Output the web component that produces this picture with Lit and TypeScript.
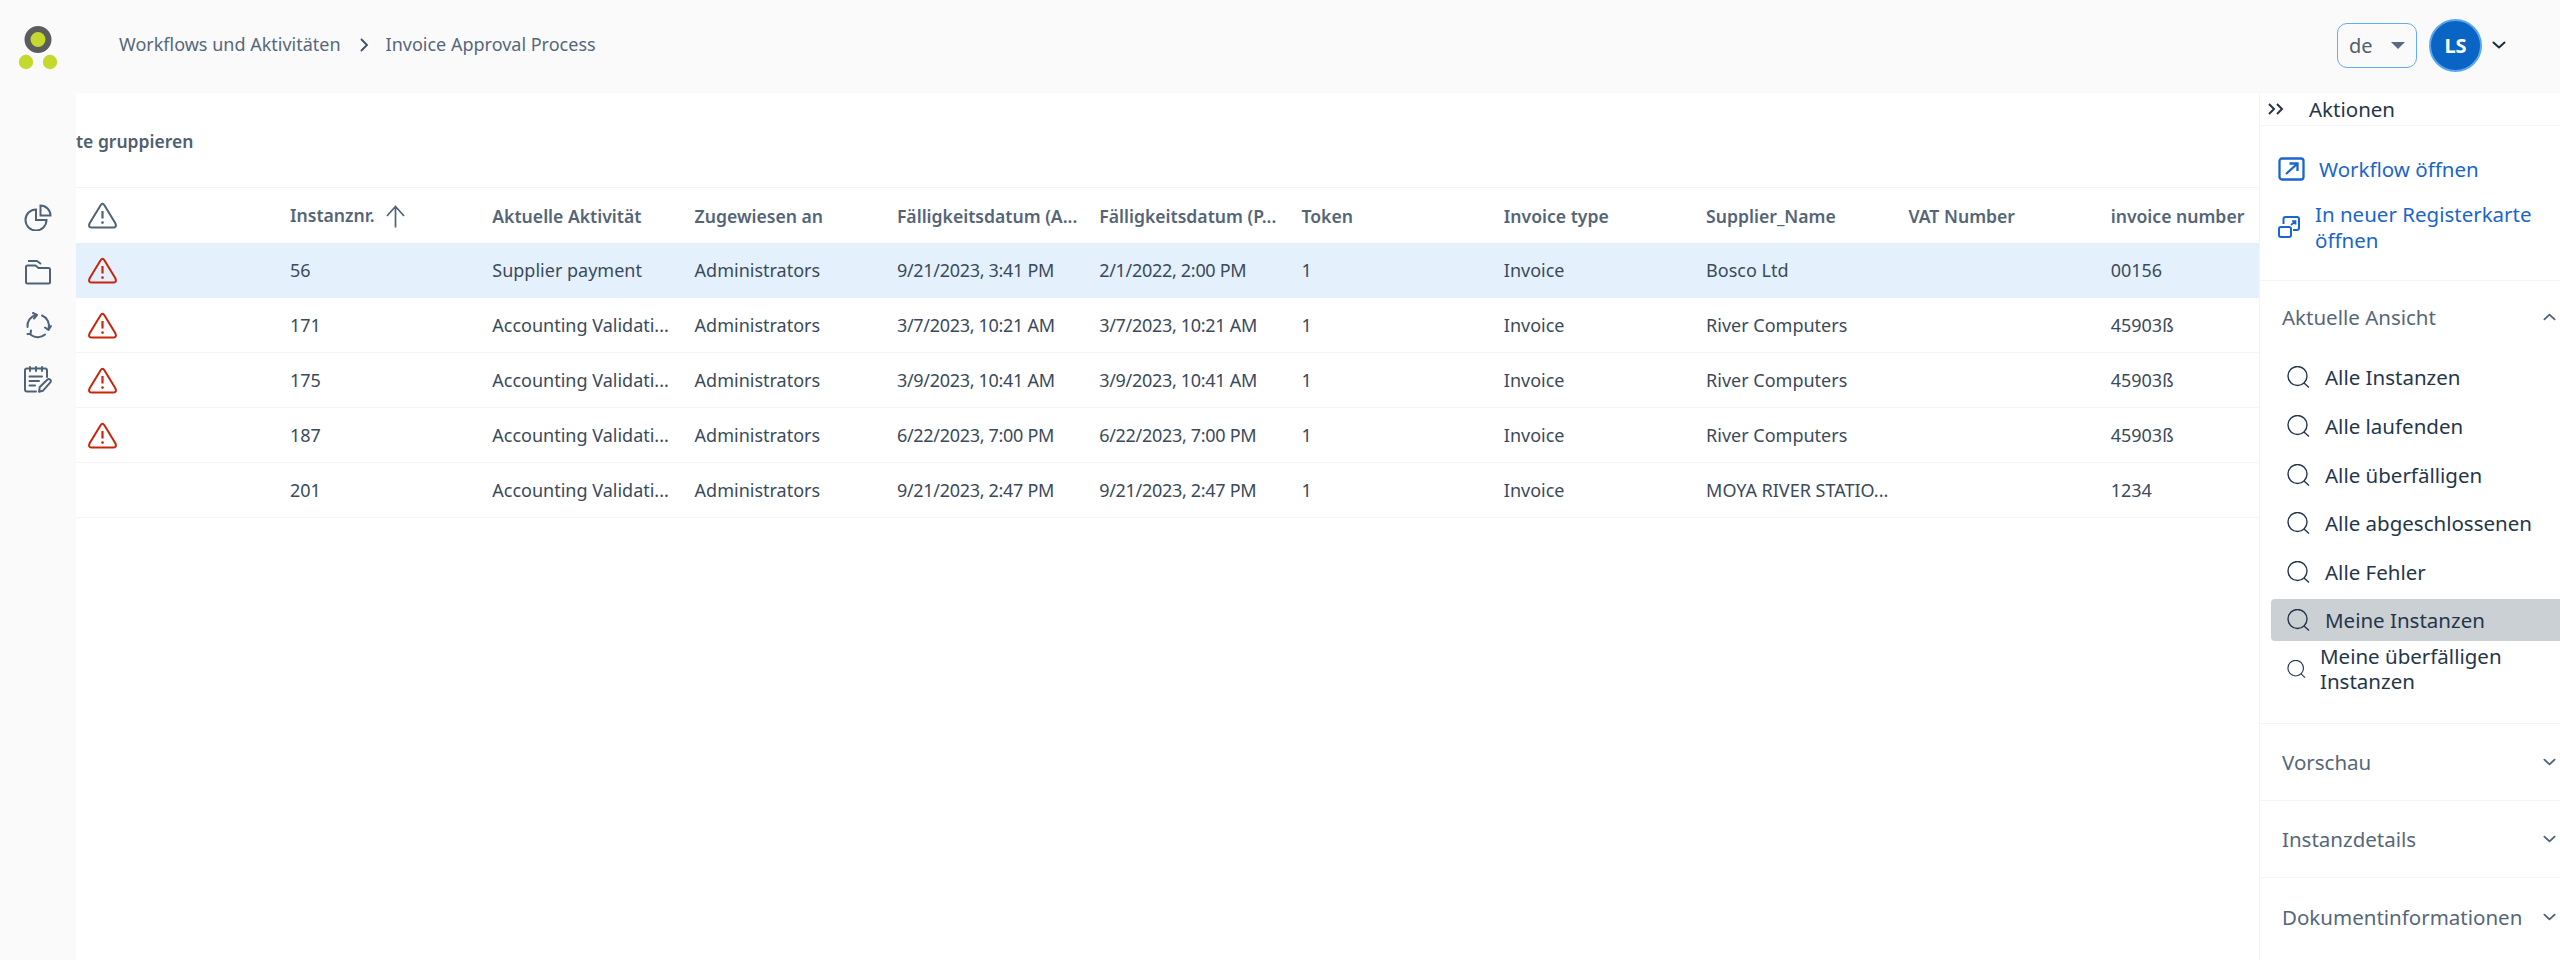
import { LitElement, html, css, svg } from 'lit';
import { customElement } from 'lit/decorators.js';

const warn = svg`<path d="M12.6 3.2 Q14.5 0.4 16.4 3.2 L27.2 21 Q29.4 25.6 24.8 25.6 H4.2 Q-0.4 25.6 1.8 21 Z" fill="none" stroke="currentColor" stroke-width="2"/><path d="M14.5 9 V16.5" stroke="currentColor" stroke-width="2.2"/><circle cx="14.5" cy="20.6" r="1.3" fill="currentColor"/>`;

const chevDown = html`<svg class="chev" viewBox="0 0 14 8"><path d="M1.5 1.5 L7 6.5 L12.5 1.5" fill="none" stroke="currentColor" stroke-width="2" stroke-linecap="round" stroke-linejoin="round"/></svg>`;
const chevUp = html`<svg class="chev" viewBox="0 0 14 8"><path d="M1.5 6.5 L7 1.5 L12.5 6.5" fill="none" stroke="currentColor" stroke-width="2" stroke-linecap="round" stroke-linejoin="round"/></svg>`;
const search = html`<svg class="search" viewBox="0 0 23 22"><circle cx="10.5" cy="10" r="9.5" fill="none" stroke="currentColor" stroke-width="1.4"/><path d="M17 17 L22 21.5" fill="none" stroke="currentColor" stroke-width="1.4"/></svg>`;

const columns = ['Instanznr.', 'Aktuelle Aktivität', 'Zugewiesen an', 'Fälligkeitsdatum (A...', 'Fälligkeitsdatum (P...', 'Token', 'Invoice type', 'Supplier_Name', 'VAT Number', 'invoice number'];

const rows = [
  { warn: true, selected: true, cells: ['56', 'Supplier payment', 'Administrators', '9/21/2023, 3:41 PM', '2/1/2022, 2:00 PM', '1', 'Invoice', 'Bosco Ltd', '', '00156'] },
  { warn: true, cells: ['171', 'Accounting Validati...', 'Administrators', '3/7/2023, 10:21 AM', '3/7/2023, 10:21 AM', '1', 'Invoice', 'River Computers', '', '45903ß'] },
  { warn: true, cells: ['175', 'Accounting Validati...', 'Administrators', '3/9/2023, 10:41 AM', '3/9/2023, 10:41 AM', '1', 'Invoice', 'River Computers', '', '45903ß'] },
  { warn: true, cells: ['187', 'Accounting Validati...', 'Administrators', '6/22/2023, 7:00 PM', '6/22/2023, 7:00 PM', '1', 'Invoice', 'River Computers', '', '45903ß'] },
  { warn: false, cells: ['201', 'Accounting Validati...', 'Administrators', '9/21/2023, 2:47 PM', '9/21/2023, 2:47 PM', '1', 'Invoice', 'MOYA RIVER STATIO...', '', '1234'] },
];

const views = ['Alle Instanzen', 'Alle laufenden', 'Alle überfälligen', 'Alle abgeschlossenen', 'Alle Fehler'];

@customElement('app-root')
export class AppRoot extends LitElement {
  static styles = css`
    :host {
      display: block;
      width: 2560px;
      height: 960px;
      overflow: hidden;
      background: #fafafa;
      font-family: 'Noto Sans', sans-serif;
      color: #25364a;
    }
    .header {
      height: 93px;
      display: flex;
      align-items: center;
    }
    .logo {
      width: 76px;
      height: 93px;
      flex: none;
    }
    .crumbs {
      margin-left: 43px;
      display: flex;
      align-items: center;
      font-size: 18px;
      color: #56677a;
      margin-top: -5px;
    }
    .crumbs svg {
      width: 10px;
      height: 16px;
      margin: 2px 17px 0 18px;
      color: #3d4f63;
    }
    .top-right {
      margin-left: auto;
      display: flex;
      align-items: center;
      margin-right: 54px;
      margin-top: -3px;
    }
    .lang {
      width: 80px;
      height: 45px;
      box-sizing: border-box;
      border: 1px solid #63adf5;
      border-radius: 10px;
      display: flex;
      align-items: center;
      padding: 0 11px;
      font-size: 20px;
      color: #4f5f70;
    }
    .caret {
      margin-left: auto;
      width: 0;
      height: 0;
      border-left: 7px solid transparent;
      border-right: 7px solid transparent;
      border-top: 7px solid #5a6b7d;
    }
    .avatar {
      width: 53px;
      height: 53px;
      box-sizing: border-box;
      margin-left: 12px;
      border-radius: 50%;
      background: #0a64c4;
      border: 2px solid #5aa7f0;
      color: #fff;
      font-weight: 700;
      font-size: 20px;
      display: flex;
      align-items: center;
      justify-content: center;
    }
    .top-right .chev {
      width: 14px;
      height: 8px;
      margin-left: 10px;
      color: #1d2b3a;
    }
    .body {
      display: flex;
      height: 867px;
    }
    .rail {
      width: 76px;
      flex: none;
      padding-top: 111px;
      box-sizing: border-box;
      display: flex;
      flex-direction: column;
      align-items: center;
      gap: 27px;
      color: #4f6277;
    }
    .rail svg {
      width: 28px;
      height: 27px;
      display: block;
    }
    .main {
      width: 2184px;
      flex: none;
      background: #fff;
      overflow: hidden;
    }
    .group {
      height: 94px;
      box-sizing: border-box;
      padding-top: 36px;
      font-size: 17.5px;
      line-height: 24px;
      font-weight: 600;
      color: #505f70;
      white-space: nowrap;
    }
    .row {
      display: grid;
      grid-template-columns: 214px repeat(9, 202.3px) 150px;
      align-items: center;
      height: 55px;
      box-sizing: border-box;
      border-bottom: 1px solid #f3f4f5;
      font-size: 18px;
      color: #3b4a5b;
      white-space: nowrap;
    }
    .row.head {
      height: 56px;
      border-top: 1px solid #f3f4f5;
      font-size: 17.6px;
      font-weight: 600;
      color: #556577;
      border-bottom: none;
    }
    .row.selected {
      background: #e4f1fd;
      border-bottom-color: #e4f1fd;
    }
    .date {
      letter-spacing: -0.3px;
    }
    .warn {
      width: 29px;
      height: 27px;
      margin-left: 12px;
      display: block;
      color: #c9240c;
    }
    .head .warn {
      color: #4f6277;
    }
    .sort {
      display: inline-block;
      width: 19px;
      height: 23px;
      margin-left: 11px;
      vertical-align: middle;
      color: #4f6277;
    }
    .panel {
      flex: 1;
      background: #fff;
      border-left: 1px solid #f3f4f5;
      overflow: hidden;
      margin-left: -1px;
    }
    .panel-head {
      height: 33px;
      box-sizing: border-box;
      border-bottom: 1px solid #f3f4f5;
      display: flex;
      align-items: center;
      font-size: 20.5px;
      color: #25364a;
      padding-left: 8px;
    }
    .panel-head svg {
      width: 16px;
      height: 12px;
      margin-right: 25px;
    }
    .actions {
      height: 155px;
      box-sizing: border-box;
      border-bottom: 1px solid #f3f4f5;
      padding: 30px 0 0 18px;
      color: #1a66c9;
      font-size: 20.5px;
      line-height: 26px;
    }
    .action {
      display: flex;
      align-items: center;
    }
    .action + .action {
      margin-top: 19px;
    }
    .action .a1 {
      width: 27px;
      height: 24px;
      margin-right: 14px;
    }
    .action .a2 {
      width: 22px;
      height: 22px;
      margin-right: 15px;
    }
    .section {
      display: flex;
      align-items: center;
      justify-content: space-between;
      height: 77px;
      box-sizing: border-box;
      padding: 0 4px 0 22px;
      font-size: 20.5px;
      color: #56677a;
      border-bottom: 1px solid #f3f4f5;
    }
    .section:last-child {
      border-bottom: none;
    }
    .section .chev {
      width: 13px;
      height: 8px;
      color: #4f6277;
    }
    .section.open {
      height: 72px;
      border-bottom: none;
    }
    .views {
      height: 371px;
      box-sizing: border-box;
      border-bottom: 1px solid #f3f4f5;
      padding-left: 11px;
    }
    .view {
      height: 48.7px;
      display: flex;
      align-items: center;
      padding-left: 16px;
      font-size: 20.5px;
      color: #25364a;
    }
    .view .search {
      width: 23px;
      height: 22px;
      margin-right: 15px;
      flex: none;
    }
    .view.active {
      height: 42px;
      margin: 3px 0;
      background: #cbd0d4;
      border-radius: 4px 0 0 4px;
    }
    .view.small {
      height: 50px;
      line-height: 25px;
    }
    .view.small .search {
      width: 19px;
      height: 18px;
      margin-right: 14px;
    }
  `;

  render() {
    return html`
      <div class="header">
        <svg class="logo" viewBox="0 0 76 93">
          <circle cx="38" cy="39.5" r="10.5" fill="#c4d82e" stroke="#5c5c5c" stroke-width="6"/>
          <circle cx="26" cy="62" r="7.2" fill="#c4d82e"/>
          <circle cx="50" cy="62" r="7.2" fill="#c4d82e"/>
        </svg>
        <div class="crumbs">
          <span>Workflows und Aktivitäten</span>
          <svg viewBox="0 0 10 16"><path d="M2 2 L8 8 L2 14" fill="none" stroke="currentColor" stroke-width="1.8"/></svg>
          <span>Invoice Approval Process</span>
        </div>
        <div class="top-right">
          <div class="lang">de<span class="caret"></span></div>
          <div class="avatar">LS</div>
          ${chevDown}
        </div>
      </div>
      <div class="body">
        <div class="rail">
          <svg viewBox="0 0 28 27" fill="none" stroke="currentColor" stroke-width="2">
            <path d="M12 5.5 A10.5 10.5 0 1 0 22.5 16 H12 Z"/>
            <path d="M16.5 1.5 A10 10 0 0 1 26.5 11.5 H16.5 Z"/>
          </svg>
          <svg viewBox="0 0 28 27" fill="none" stroke="currentColor" stroke-width="2" stroke-linejoin="round">
            <path d="M2 9 Q2 7.5 3.5 7.5 H11.5 L14.5 10 H24.5 Q26 10 26 11.5 V24 Q26 25.5 24.5 25.5 H3.5 Q2 25.5 2 24 Z"/>
            <path d="M4 3 H13 L17 6"/>
          </svg>
          <svg viewBox="0 0 28 27" fill="none" stroke="currentColor" stroke-width="2" stroke-linecap="round" stroke-linejoin="round">
            <path d="M3.5 15 A11 11 0 0 1 12 3"/>
            <path d="M9 1 L13 3 L10 6.5"/>
            <path d="M18 3.5 A11 11 0 0 1 24.5 17"/>
            <path d="M27 14 L24.5 18 L21 15.5"/>
            <path d="M21 22.5 A11 11 0 0 1 7 23"/>
            <path d="M3.5 22 L6.5 22 L7 18.5"/>
          </svg>
          <svg viewBox="0 0 28 27" fill="none" stroke="currentColor" stroke-width="2" stroke-linecap="round" stroke-linejoin="round">
            <path d="M12 25.5 H3 Q1 25.5 1 23.5 V4.5 Q1 2.5 3 2.5 H21 Q23 2.5 23 4.5 V11"/>
            <path d="M6 1 V5 M12 1 V5 M18 1 V5"/>
            <path d="M5.5 10.5 H18 M5.5 15 H15 M5.5 19.5 H11"/>
            <path d="M15 25.8 L15.8 21 L23.5 13.5 Q25 12.5 26.3 13.7 Q27.4 15 26.3 16.4 L18.8 24.8 Z"/>
          </svg>
        </div>
        <div class="main">
          <div class="group">te gruppieren</div>
          <div class="row head">
            <svg class="warn" viewBox="0 0 29 27">${warn}</svg>
            ${columns.map(
              (c, i) => html`<div>
                ${c}${i === 0
                  ? html`<svg class="sort" viewBox="0 0 19 23"><path d="M9.5 22.5 V1.5 M1 11 L9.5 1.5 L18 11" fill="none" stroke="currentColor" stroke-width="1.7"/></svg>`
                  : ''}
              </div>`
            )}
          </div>
          ${rows.map(
            (r) => html`<div class="row ${r.selected ? 'selected' : ''}">
              ${r.warn ? html`<svg class="warn" viewBox="0 0 29 27">${warn}</svg>` : html`<span></span>`}
              ${r.cells.map((c, i) => html`<div class="${i === 3 || i === 4 ? 'date' : ''}">${c}</div>`)}
            </div>`
          )}
        </div>
        <div class="panel">
          <div class="panel-head">
            <svg viewBox="0 0 16 12" fill="none" stroke="#25364a" stroke-width="2"><path d="M1 1 L6 6 L1 11 M9 1 L14 6 L9 11"/></svg>
            Aktionen
          </div>
          <div class="actions">
            <div class="action">
              <svg class="a1" viewBox="0 0 27 24" fill="none" stroke="currentColor" stroke-width="2.3"><rect x="1.5" y="1.5" width="24" height="21" rx="2.5"/><path d="M8 17 L19 7 M11.5 6.5 H19.5 V14"/></svg>
              Workflow öffnen
            </div>
            <div class="action">
              <svg class="a2" viewBox="0 0 22 22" fill="none" stroke="currentColor" stroke-width="2"><rect x="1" y="11" width="12" height="10" rx="2"/><path d="M5.5 8 V3 Q5.5 1 7.5 1 H19 Q21 1 21 3 V12 Q21 14 19 14 H15"/><path d="M13 9 L17 5.5 M14 5 H17.5 V8.5" stroke-width="1.7"/></svg>
              <span>In neuer Registerkarte<br />öffnen</span>
            </div>
          </div>
          <div class="section open">Aktuelle Ansicht ${chevUp}</div>
          <div class="views">
            ${views.map((v) => html`<div class="view">${search}${v}</div>`)}
            <div class="view active">${search}Meine Instanzen</div>
            <div class="view small">${search}<span>Meine überfälligen<br />Instanzen</span></div>
          </div>
          <div class="section">Vorschau ${chevDown}</div>
          <div class="section">Instanzdetails ${chevDown}</div>
          <div class="section">Dokumentinformationen ${chevDown}</div>
        </div>
      </div>
    `;
  }
}
